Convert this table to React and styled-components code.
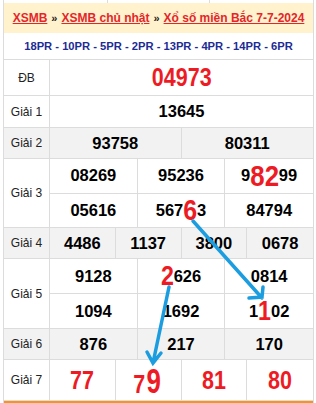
import React from 'react'
import styled, { createGlobalStyle } from 'styled-components'

const GlobalStyle = createGlobalStyle`
  body {
    margin: 0;
    background: #fff;
    font-family: "Liberation Sans", Arial, sans-serif;
  }
`

const Page = styled.div`
  position: relative;
  width: 316px;
  height: 403px;
  overflow: hidden;
  padding-left: 3px;
  box-sizing: border-box;
`

const Board = styled.div`
  width: 311px;
  box-sizing: border-box;
  border-left: 1px solid #dcdcdc;
  border-right: 1px solid #dcdcdc;
`

const TopStrip = styled.div`
  display: grid;
  grid-template-columns: 104px 102px 1fr;
  height: 3px;
  & > div {
    border-right: 1px solid #dcdcdc;
  }
  & > div:last-child {
    border-right: none;
  }
`

const Crumbs = styled.div`
  height: 30px;
  background: #fff2cc;
  display: flex;
  align-items: center;
  justify-content: center;
  gap: 4px;
  font-size: 12px;
  font-weight: bold;
  white-space: nowrap;
`

const Crumb = styled.a`
  color: #e3262b;
  text-decoration: underline;
`

const Sep = styled.span`
  color: #222;
  font-size: 11px;
`

const PrLine = styled.div`
  height: 27px;
  box-sizing: border-box;
  border-bottom: 1px solid #dcdcdc;
  display: flex;
  align-items: center;
  justify-content: center;
  color: #1d2b95;
  font-size: 11.2px;
  font-weight: bold;
  white-space: nowrap;
`

const Row = styled.div`
  display: grid;
  grid-template-columns: 46px 1fr;
  height: ${p => p.$h}px;
  box-sizing: border-box;
  border-bottom: 1px solid #dcdcdc;
  background: ${p => (p.$shade ? '#f2f2f2' : '#fff')};
`

const Label = styled.div`
  border-right: 1px solid #dcdcdc;
  display: flex;
  align-items: center;
  justify-content: center;
  font-size: 12px;
  color: #222;
`

const Lines = styled.div`
  display: flex;
  flex-direction: column;
`

const Line = styled.div`
  flex: 1;
  display: grid;
  grid-template-columns: repeat(${p => p.$cols}, 1fr);
  & + & {
    border-top: 1px solid #dcdcdc;
  }
`

const Cell = styled.div`
  display: flex;
  align-items: center;
  justify-content: center;
  border-right: 1px solid #dcdcdc;
  font-size: 16.5px;
  font-weight: bold;
  color: #000;
  white-space: nowrap;
  &:last-child {
    border-right: none;
  }
`

const RedNum = styled.span`
  display: inline-block;
  color: #ed1c24;
  font-size: ${p => p.$size || 25}px;
  font-weight: bold;
  line-height: 1;
  transform: scaleX(0.86);
`

const Hi = styled.span`
  display: inline-block;
  color: #ed1c24;
  font-size: ${p => p.$size || 28}px;
  line-height: 1;
  transform: scaleX(0.86);
  margin: 0 ${p => -0.04 * (p.$n || 1)}em;
`

const Bottom = styled.div`
  height: 2px;
  background: #f7941d;
`

const Arrows = styled.svg`
  position: absolute;
  left: 0;
  top: 0;
  pointer-events: none;
`

const prize = (label, h, lines, shade) => ({ label, h, lines, shade })

const rows = [
  prize('Giải 1', 32, [['13645']]),
  prize('Giải 2', 31, [['93758', '80311']], true),
  prize('Giải 3', 69, [
    ['08269', '95236', <>9<Hi $size={30} $n={2}>82</Hi>99</>],
    ['05616', <>567<Hi $size={29}>6</Hi>3</>, '84794'],
  ]),
  prize('Giải 4', 31, [['4486', '1137', '3800', '0678']], true),
  prize('Giải 5', 70, [
    ['9128', <><Hi $size={27}>2</Hi>626</>, '0814'],
    ['1094', '1692', <>1<Hi $size={27}>1</Hi>02</>],
  ]),
  prize('Giải 6', 31, [['876', '217', '170']], true),
]

const links = ['XSMB', 'XSMB chủ nhật', 'Xổ số miền Bắc 7-7-2024']

export default function App() {
  return (
    <Page>
      <GlobalStyle />
      <Board>
        <TopStrip><div /><div /><div /></TopStrip>
        <Crumbs>
          {links.map((l, i) => (
            <React.Fragment key={l}>
              {i > 0 && <Sep>»</Sep>}
              <Crumb href="#">{l}</Crumb>
            </React.Fragment>
          ))}
        </Crumbs>
        <PrLine>18PR - 10PR - 5PR - 2PR - 13PR - 4PR - 14PR - 6PR</PrLine>

        <Row $h={36}>
          <Label>ĐB</Label>
          <Cell><RedNum>04973</RedNum></Cell>
        </Row>

        {rows.map(r => (
          <Row key={r.label} $h={r.h} $shade={r.shade}>
            <Label>{r.label}</Label>
            <Lines>
              {r.lines.map((line, i) => (
                <Line key={i} $cols={line.length}>
                  {line.map((v, j) => <Cell key={j}>{v}</Cell>)}
                </Line>
              ))}
            </Lines>
          </Row>
        ))}

        <Row $h={41}>
          <Label>Giải 7</Label>
          <Line $cols={4}>
            <Cell><RedNum>77</RedNum></Cell>
            <Cell><RedNum>7<RedNum $size={35}>9</RedNum></RedNum></Cell>
            <Cell><RedNum>81</RedNum></Cell>
            <Cell><RedNum>80</RedNum></Cell>
          </Line>
        </Row>
        <Bottom />
      </Board>

      <Arrows width="316" height="403" viewBox="0 0 316 403">
        <g stroke="#1c9de0" strokeWidth="3.5" strokeLinecap="round" fill="none">
          <path d="M193 221 L262 298 M249 298 L262 297 L263 287" />
          <path d="M169 287 L153 363 M147 352 L153 363 L161 353" />
        </g>
      </Arrows>
    </Page>
  )
}
